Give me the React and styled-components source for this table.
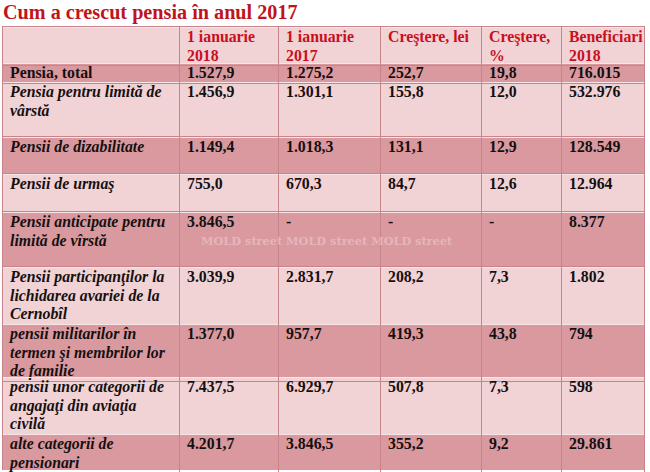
import React from "react";
import styled, { createGlobalStyle } from "styled-components";

const Global = createGlobalStyle`
    html, body {
        margin: 0;
        padding: 0;
        background: #ffffff;
    }
    body {
        font-family: "Liberation Serif", "Times New Roman", serif;
    }
`;

const Page = styled.div`
    width: 650px;
    height: 472px;
    overflow: hidden;
    padding: 0 0 0 2px;
    box-sizing: border-box;
    position: relative;
`;

const Title = styled.h1`
    margin: 0;
    height: 26px;
    font-family: "Liberation Serif", "Times New Roman", serif;
    font-size: 20.2px;
    line-height: 24px;
    font-weight: bold;
    color: #c0141c;
    padding-left: 1px;
`;

const Table = styled.div`
    width: 643px;
    border-top: 1px solid #c8848b;
    border-left: 1px solid #c8848b;
    box-sizing: border-box;
    font-family: "Liberation Serif", "Times New Roman", serif;
    font-size: 15.8px;
    font-weight: bold;
    color: #151010;
`;

const Row = styled.div`
    display: grid;
    grid-template-columns: 177px 99px 102px 101px 80px 83px;
    height: ${props => props.h}px;
    background: ${props => (props.dark ? "#da999f" : "#f1d2d5")};
`;

const Cell = styled.div`
    box-sizing: border-box;
    padding: 1px 4px 0 7px;
    line-height: 18.5px;
    border-right: 1px solid #c8848b;
    border-bottom: 1px solid #c8848b;
    box-shadow: inset 0 1px 0 #f7e6e8;
    font-style: ${props => (props.italic ? "italic" : "normal")};
    color: ${props => (props.head ? "#c8101c" : "#151010")};
    white-space: normal;
`;

const Watermark = styled.div`
    position: absolute;
    left: 201px;
    top: 234px;
    font-family: "DejaVu Serif", serif;
    font-weight: bold;
    font-size: 11.3px;
    color: rgba(255, 255, 255, 0.3);
    white-space: nowrap;
    pointer-events: none;
`;

const headers = ["", "1 ianuarie 2018", "1 ianuarie 2017", "Creştere, lei", "Creştere, %", "Beneficiari 2018"];

const rows = [
    { h: 19, dark: true, italic: false, cells: ["Pensia, total", "1.527,9", "1.275,2", "252,7", "19,8", "716.015"] },
    { h: 55, dark: false, italic: true, cells: ["Pensia pentru limită de vârstă", "1.456,9", "1.301,1", "155,8", "12,0", "532.976"] },
    { h: 37, dark: true, italic: true, cells: ["Pensii de dizabilitate", "1.149,4", "1.018,3", "131,1", "12,9", "128.549"] },
    { h: 38, dark: false, italic: true, cells: ["Pensii de urmaş", "755,0", "670,3", "84,7", "12,6", "12.964"] },
    { h: 55, dark: true, italic: true, cells: ["Pensii anticipate pentru limită de vîrstă", "3.846,5", "-", "-", "-", "8.377"] },
    { h: 57, dark: false, italic: true, cells: ["Pensii participanţilor la lichidarea avariei de la Cernobîl", "3.039,9", "2.831,7", "208,2", "7,3", "1.802"] },
    { h: 53, dark: true, italic: true, cells: ["pensii militarilor în termen şi membrilor lor de familie", "1.377,0", "957,7", "419,3", "43,8", "794"] },
    { h: 57, dark: false, italic: true, cells: ["pensii unor categorii de angajaţi din aviaţia civilă", "7.437,5", "6.929,7", "507,8", "7,3", "598"] },
    { h: 36, dark: true, italic: true, cells: ["alte categorii de pensionari", "4.201,7", "3.846,5", "355,2", "9,2", "29.861"] },
];

export default function App() {
    return (
        <Page>
            <Global />
            <Title>Cum a crescut pensia în anul 2017</Title>
            <Table>
                <Row h={36}>
                    {headers.map((t, i) => (
                        <Cell key={i} head>
                            {t}
                        </Cell>
                    ))}
                </Row>
                {rows.map((r, i) => (
                    <Row key={i} h={r.h} dark={r.dark}>
                        {r.cells.map((c, j) => (
                            <Cell key={j} italic={j === 0 && r.italic}>
                                {c}
                            </Cell>
                        ))}
                    </Row>
                ))}
            </Table>
            <Watermark>MOLD street MOLD street MOLD street</Watermark>
        </Page>
    );
}
